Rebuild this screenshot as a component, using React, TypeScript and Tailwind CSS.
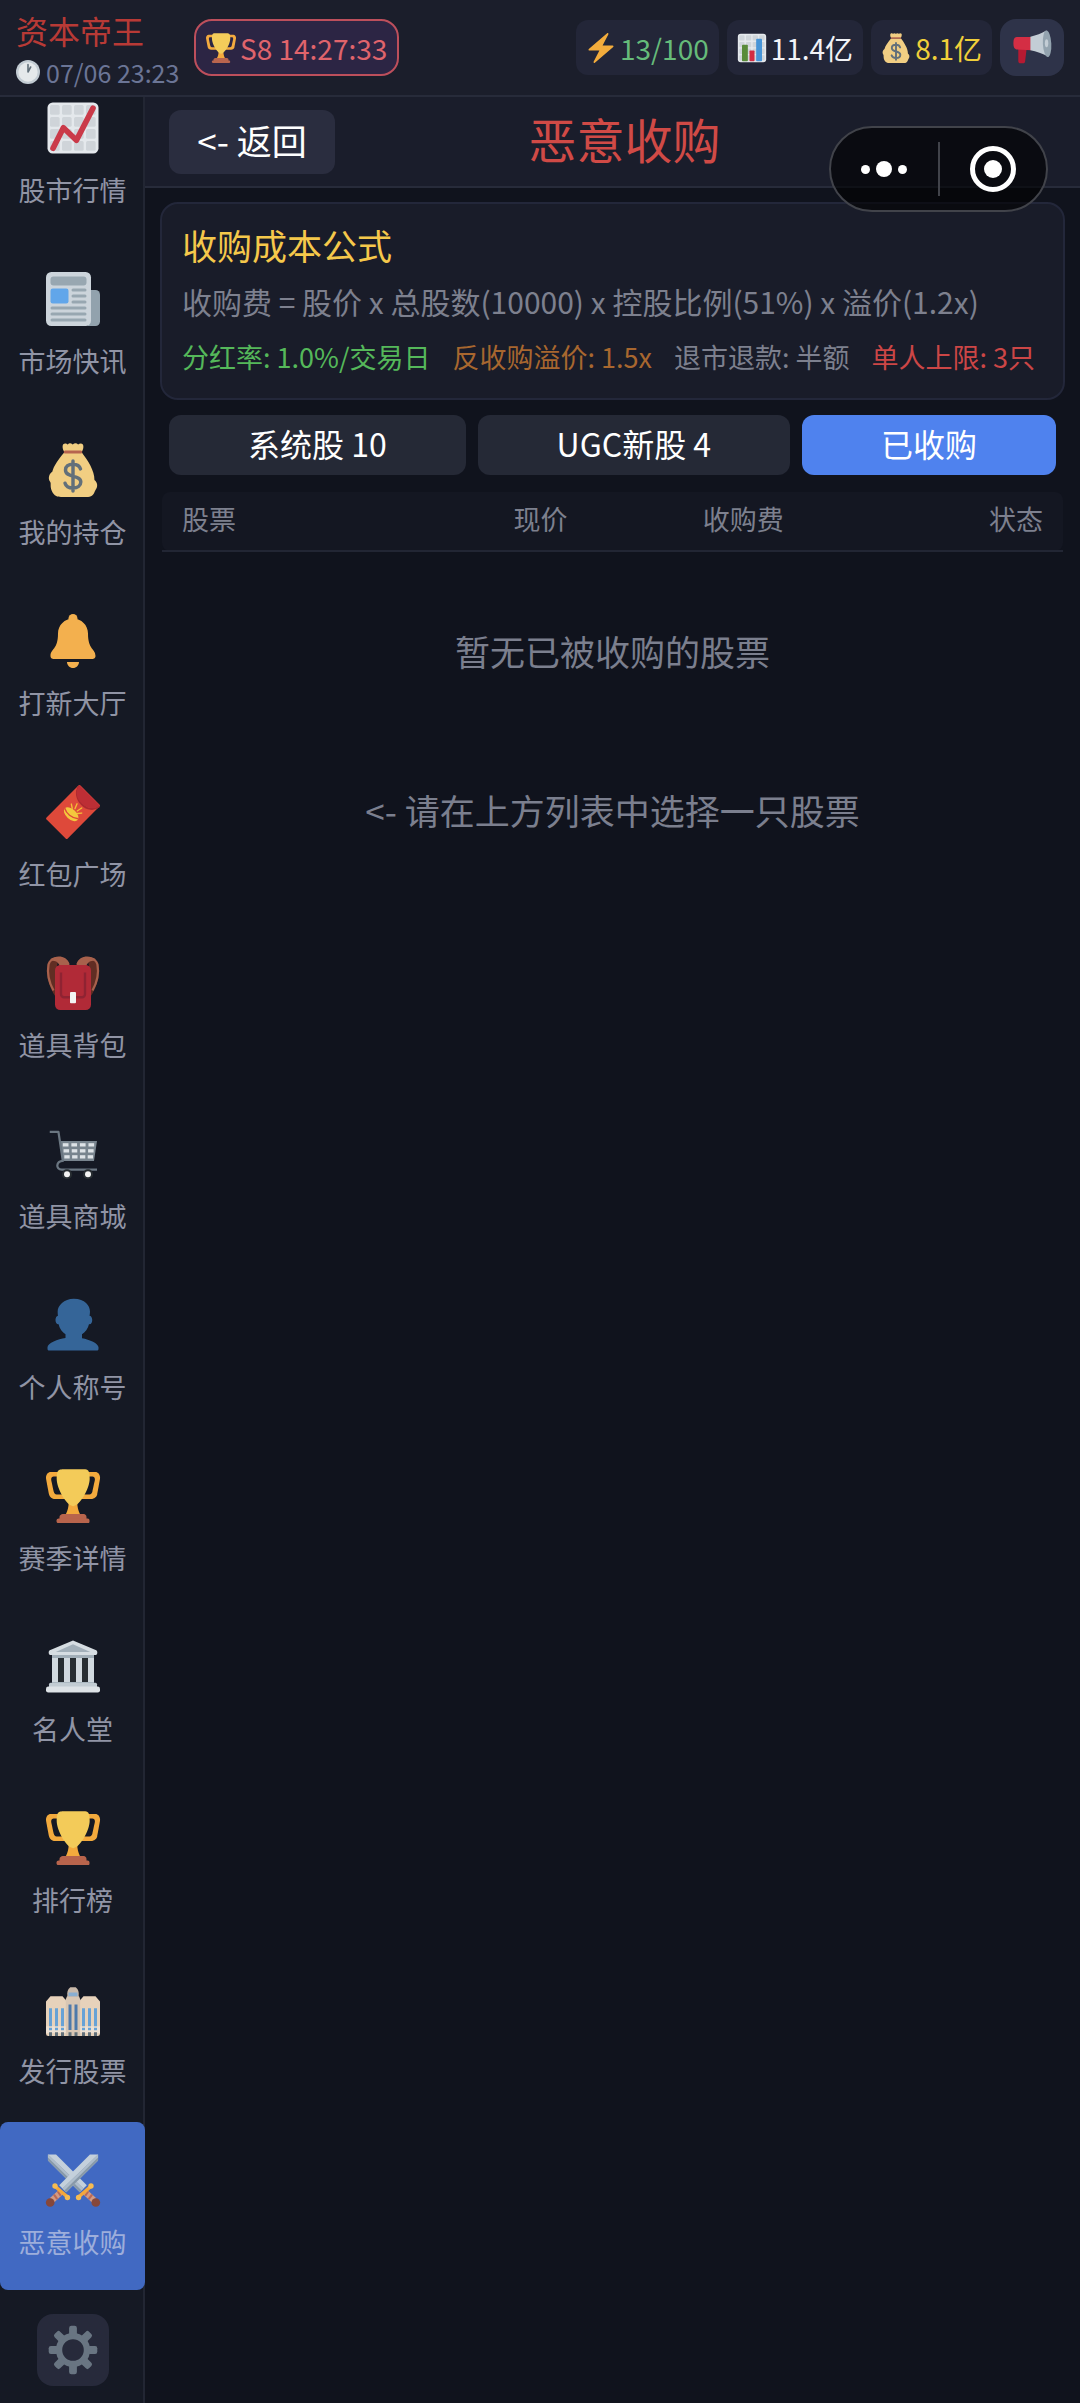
import type { PropsWithChildren, ReactNode } from "react";

import clsx from "clsx";

function Emoji({ className, children }: PropsWithChildren<{ className?: string }>) {
  return (
    <svg viewBox="0 0 36 36" aria-hidden="true" className={clsx("shrink-0 overflow-visible opacity-95", className)}>
      {children}
    </svg>
  );
}

type IconProps = { className?: string };

function TrophyIcon({ className }: IconProps) {
  return (
    <Emoji className={className}>
      <path
        fill="#FFB23F"
        d="M5.123 5h6C12.227 5 13 4.896 13 6V4c0-1.104-.773-2-1.877-2h-8c-2 0-3.583 2.125-3 5 0 0 1.791 9.375 1.917 9.958C2.373 18.5 4.164 20 6.081 20h6.958c1.105 0-.039-1.896-.039-3v-2c0 1.104-.773 2-1.877 2h-4c-1.104 0-1.833-1.042-2-2S3.539 7.667 3.539 7.667C3.206 5.75 4.018 5 5.123 5zm25.812 0h-6C23.831 5 22 4.896 22 6V4c0-1.104 1.831-2 2.935-2h8c2 0 3.584 2.125 3 5 0 0-1.633 9.419-1.771 10-.354 1.5-2.042 3-4 3h-7.146C21.914 20 22 18.104 22 17v-2c0 1.104 1.831 2 2.935 2h4c1.104 0 1.834-1.042 2-2s1.584-7.333 1.584-7.333C32.851 5.75 32.04 5 30.935 5zM20.832 22c0-6.958-2.709 0-2.709 0s-3-6.958-3 0-3.291 10-3.291 10h12.292c-.001 0-3.292-3.042-3.292-10z"
      />
      <path
        fill="#FFD55C"
        d="M29.123 6.577c0 6.775-6.77 18.192-11 18.192-4.231 0-11-11.417-11-18.192 0-5.195 1-6.319 3-6.319 1.374 0 6.025-.027 8-.027l7-.001c2.917-.001 4 .684 4 6.347z"
      />
      <path
        fill="#C1694F"
        d="M27 33c0 1.104.227 2-.877 2h-16C9.018 35 9 34.104 9 33v-1c0-1.104 1.164-2 2.206-2h13.917c1.042 0 1.877.896 1.877 2v1z"
      />
      <path
        fill="#C1694F"
        d="M29 34.625c0 .76.165 1.375-1.252 1.375H8.498C7.206 36 7 35.385 7 34.625v-.25C7 33.615 7.738 33 8.498 33h19.25c.759 0 1.252.615 1.252 1.375v.25z"
      />
    </Emoji>
  );
}

function ClockIcon({ className }: IconProps) {
  return (
    <Emoji className={className}>
      <circle cx="18" cy="18" r="18" fill="#CCD6DD" />
      <circle cx="18" cy="18" r="14.5" fill="#F0F4F6" />
      <path d="M18 18V7M18 18l4-7.5" stroke="#66757F" strokeWidth="2.4" strokeLinecap="round" />
    </Emoji>
  );
}

function BoltIcon({ className }: IconProps) {
  return (
    <Emoji className={className}>
      <path
        fill="#FFB43D"
        d="M32.938 15.651C32.792 15.26 32.418 15 32 15H19.925L26.89 1.458c.219-.426.106-.947-.271-1.243C26.437.071 26.218 0 26 0c-.233 0-.466.082-.653.243L18 6.588 3.347 19.243c-.316.273-.43.714-.284 1.105S3.582 21 4 21h12.075L9.11 34.542c-.219.426-.106.947.271 1.243.182.144.401.215.619.215.233 0 .466-.082.653-.243L18 29.412l14.653-12.655c.317-.273.43-.714.285-1.106z"
      />
    </Emoji>
  );
}

const gridSteps = [2.7, 10.7, 18.7, 26.7];

function ChartPaper() {
  return (
    <>
      <rect x="1" y="1" width="34" height="34" rx="3.5" fill="#F0F4F7" />
      {gridSteps.map((y) =>
        gridSteps.map((x) => <rect key={`${x}-${y}`} x={x} y={y} width="6.4" height="6.4" rx="1" fill="#D9DFE3" />)
      )}
    </>
  );
}

function BarChartIcon({ className }: IconProps) {
  return (
    <Emoji className={className}>
      <ChartPaper />
      <rect x="6" y="14" width="7" height="20" rx="1" fill="#5C913B" />
      <rect x="15" y="21" width="6" height="13" rx="1" fill="#DD2E44" />
      <rect x="23" y="7" width="7" height="27" rx="1" fill="#4B9BE0" />
    </Emoji>
  );
}

function TrendIcon({ className }: IconProps) {
  return (
    <Emoji className={className}>
      <ChartPaper />
      <path
        d="M4.7 31.5 11.6 17.8 20.3 26.2 31.3 4.8"
        fill="none"
        stroke="#D43C4C"
        strokeWidth="3.8"
        strokeLinecap="round"
        strokeLinejoin="round"
      />
    </Emoji>
  );
}

function MoneyBagIcon({ className }: IconProps) {
  return (
    <Emoji className={className}>
      <path
        fill="#FDD888"
        d="M12 6.5C8.500 10.5 5 15.5 4.2 19.2 2.2 20.5 1.4 23 2.3 25.2c.7 1 .9 1.3.8 2.6-.1 3.2 1.2 6 3.700 7.6.8.5 2 .6 3.200.6h17c1.500 0 2.700-.1 3.800-1 1.300-1 1.400-2.400 2.200-3.700 1.700-2.300 1.500-5-.7-6.700.1-6.200-4.600-13.200-8.300-18.100z"
      />
      <path
        fill="#FDD888"
        d="M12.3 6C11 4.5 10.7 2 11.5.9c.8-1 2.300-.6 3 .1C15.500-.1 16.600.1 17.800 1c1.200-.9 2.500-1.100 3.600 0 1-.8 2.400-1 3.200 0 .7 1.200.2 3.600-.9 5z"
      />
      <rect x="11.8" y="5" width="12.4" height="2" rx="1" fill="#BF6952" />
      <path
        d="M18 12v20M23 17.3c-.6-2.200-2.600-3.200-5-3.200-3 0-5 1.500-5 3.900 0 5.500 10.200 3 10.200 8 0 2.500-2.200 4-5.200 4-2.700 0-4.700-1.100-5.300-3.200"
        fill="none"
        stroke="#67757F"
        strokeWidth="2.3"
        strokeLinecap="round"
      />
    </Emoji>
  );
}

function MegaphoneIcon({ className }: IconProps) {
  return (
    <Emoji className={className}>
      <path fill="#BE1931" d="M5 18h8l-1.5 12.5c-.1 1.300-.8 2-2 2H7c-1.200 0-2-.8-2-2z" />
      <path fill="#DD2E44" d="M3.5 7.5H17v12.7L4 19.5C1.5 19.3.4 17.5.4 13.5.4 9.5 1.2 7.7 3.5 7.5z" />
      <path fill="#CCD6DD" d="M16.5 7.4C22 6.2 27 4 31.6 1.5l2 24.7C28 23.6 22 21 16.5 20.2z" />
      <ellipse cx="32.3" cy="14" rx="4" ry="12.5" fill="#99AAB5" transform="rotate(-3 32.3 14)" />
      <ellipse cx="31.8" cy="13.5" rx="1.6" ry="3.8" fill="#CCD6DD" />
    </Emoji>
  );
}

function NewspaperIcon({ className }: IconProps) {
  return (
    <Emoji className={className}>
      <path fill="#99AAB5" d="M28 12h5a3 3 0 0 1 3 3v18a3 3 0 0 1-3 3h-5z" />
      <rect width="30" height="36" rx="3.5" fill="#D6DFE5" />
      <rect x="3" y="3" width="24" height="6" rx="2" fill="#A0AFB9" />
      <rect x="3" y="11" width="12" height="10" rx="1.5" fill="#66AEF5" />
      <path
        d="M18 12h8M18 16h8M18 20h8M4 24h22M4 28h22M4 32h22"
        stroke="#A0AFB9"
        strokeWidth="2"
        strokeLinecap="round"
      />
    </Emoji>
  );
}

function BellIcon({ className }: IconProps) {
  return (
    <Emoji className={className}>
      <path
        fill="#FFB951"
        d="M28 13c0 11 5 10 5 15 0 0 0 2-2 2H5c-2 0-2-2-2-2 0-5 5-4 5-15C8 7.478 12.477 3 18 3s10 4.478 10 10z"
      />
      <circle cx="18" cy="3" r="3" fill="#FFB951" />
      <path fill="#FFB951" d="M18 36c2.209 0 4-1.791 4-4h-8c0 2.209 1.791 4 4 4z" />
    </Emoji>
  );
}

function EnvelopeIcon({ className }: IconProps) {
  return (
    <Emoji className={className}>
      <path fill="#E94C3C" d="M21.6.4a1 1 0 0 1 1.4 0L35.6 13a1 1 0 0 1 0 1.4L14.5 35.6a1 1 0 0 1-1.4 0L.4 23a1 1 0 0 1 0-1.4z" />
      <path
        d="M22 .8c-2.600 3.800-1.600 8.800 2 12.200 3.200 3.200 7.800 4.200 11.600 1.200"
        fill="none"
        stroke="#B52B31"
        strokeWidth="1.2"
      />
      <path fill="#C73036" d="M22.3.1 35.9 13.7c-3.500 2.800-8.400 2.300-12-1.300-3.800-3.800-4.700-8.700-1.600-12.300z" />
      <ellipse cx="16.8" cy="19.5" rx="5.8" ry="3.4" fill="#FFD23F" transform="rotate(42 16.8 19.5)" />
      <path d="M12.5 15.5c1 3.500 4.500 6.500 9 7" fill="none" stroke="#E94C3C" strokeWidth=".9" />
      <path
        d="M17.5 15.5l-.6-2.8M19.3 15.8l1.4-3.3M20.8 17.3l3-2M21 19l2.8-.3"
        stroke="#FFC83A"
        strokeWidth=".9"
        strokeLinecap="round"
      />
    </Emoji>
  );
}

function BackpackIcon({ className }: IconProps) {
  return (
    <Emoji className={className}>
      <path fill="#662F23" d="M8 3C2 1 .3 5 .8 11 1.2 18 4 24 7 28V9zM28 3c6-2 7.700 2 7.200 8-.4 7-3.200 13-6.200 17V9z" />
      <path
        d="M15 5.500C13.500 0 3 0 1.700 5.500.7 11 2.200 18 5 23M21 5.500C22.500 0 33 0 34.300 5.500 35.300 11 33.800 18 31 23"
        fill="none"
        stroke="#B0654F"
        strokeWidth="1.5"
      />
      <path fill="#B0654F" d="M3 2C7-.8 14-.5 15.600 5.500V8H9.500C9 4.500 6 2.500 3 3.500zM33 2c-4-2.800-11-2.500-12.600 3.500V8h6.100c.5-3.500 3.500-5.500 6.500-4.500z" />
      <rect x="6" y="6" width="24" height="30" rx="3.5" fill="#BA2B39" />
      <path d="M10 11v14.500a2 2 0 0 0 2 2h12a2 2 0 0 0 2-2V11" fill="none" stroke="#962433" strokeWidth="1.6" />
      <rect x="16" y="24" width="4" height="7.5" rx=".6" fill="#FFFFFF" />
    </Emoji>
  );
}

function CartIcon({ className }: IconProps) {
  return (
    <Emoji className={className}>
      <path fill="#7E8A94" d="M9.3 9.3H34l-2 13.400H11.500z" />
      {[10.8, 14.8, 18.8].map((y, row) =>
        [0, 1, 2, 3].map((col) => (
          <rect
            key={`${y}-${col}`}
            x={11.2 + row * 0.5 + col * (5.7 - row * 0.25)}
            y={y}
            width={3.8 - row * 0.1}
            height="2.2"
            fill="#E9EEF2"
          />
        ))
      )}
      <path
        d="M2.5 3.2h5.800l2.900 19.400c-4.500.3-5 5.700-.7 5.800H34"
        fill="none"
        stroke="#6F7B86"
        strokeWidth="1.5"
        strokeLinejoin="round"
      />
      <circle cx="14" cy="31.5" r="3.4" fill="#292F33" />
      <circle cx="28" cy="31.5" r="3.4" fill="#292F33" />
      <circle cx="14" cy="31.5" r="2" fill="#FFFFFF" />
      <circle cx="28" cy="31.5" r="2" fill="#FFFFFF" />
    </Emoji>
  );
}

function PersonIcon({ className }: IconProps) {
  return (
    <Emoji className={className}>
      <path
        fill="#376A9F"
        d="M24 26.799v-2.566c2-1.348 4.080-3.779 4.703-6.896.186.103.206.170.413.170.991 0 1.709-1.287 1.709-2.873 0-1.562-.823-2.827-1.794-2.865.187-.674.293-1.577.293-2.735C29.324 5.168 26 .527 18.541.527c-6.629 0-10.777 4.641-10.777 8.507 0 1.123.069 2.043.188 2.755-.911.137-1.629 1.352-1.629 2.845 0 1.587.804 2.873 1.796 2.873.206 0 .025-.067.209-.170C8.952 20.453 11 22.885 13 24.232v2.414c-5 .645-12 3.437-12 6.230v1.061C1 35 2.076 35 3.137 35h29.725C33.924 35 35 35 35 33.938v-1.061c0-2.615-6-5.225-11-6.078z"
      />
    </Emoji>
  );
}

function HallIcon({ className }: IconProps) {
  return (
    <Emoji className={className}>
      <rect x="4" y="9" width="28" height="20" fill="#AAB8C2" />
      <path fill="#E1E8ED" d="M18 .4 33.5 6.800c1 .5 1 2.900-.3 3.200H2.800C1.500 9.700 1.500 7.300 2.500 6.800z" />
      <path fill="#AAB8C2" d="M18 2.800 29.500 8h-23z" />
      <path fill="#292F33" d="M8 12h4v16H8zM16 12h4v16h-4zM24 12h4v16h-4z" />
      <path fill="#DCE4EA" d="M4 12h4v16H4zM12 12h4v16h-4zM20 12h4v16h-4zM28 12h4v16h-4z" />
      <rect x="2" y="28.5" width="32" height="4" rx="1" fill="#CCD6DD" />
      <rect x="0" y="31" width="36" height="4" rx="1.5" fill="#E8EDF1" />
    </Emoji>
  );
}

function OfficeIcon({ className }: IconProps) {
  return (
    <Emoji className={className}>
      <path fill="#F3DCC4" d="M0 13l3-3.500h8l3 3.500h8l3-3.500h8l3 3.500v21.500A1.500 1.500 0 0 1 34.500 36h-33A1.500 1.500 0 0 1 0 34.500z" />
      <path fill="#F8EBDD" d="M0 29.500h36V34H0z" />
      <path
        fill="#6CAAE0"
        d="M2 17.500h2v12H2zM6 17.500h2v12H6zM10 17.500h2v12h-2zM24 17.500h2v12h-2zM28 17.500h2v12h-2zM32 17.500h2v12h-2zM2 30.500h2v1.700H2zM6 30.500h2v1.700H6zM10 30.500h2v1.700h-2zM24 30.500h2v1.700h-2zM28 30.500h2v1.700h-2zM32 30.500h2v1.700h-2z"
      />
      <path
        fill="#66757F"
        d="M2 33.500h2V36H2zM6 33.500h2V36H6zM10 33.500h2V36h-2zM24 33.500h2V36h-2zM28 33.500h2V36h-2zM32 33.500h2V36h-2z"
      />
      <path fill="#E3D0BC" d="M13.2 11.500l.8-2h8l.8 2V36h-9.600z" />
      <path fill="#D3C2B2" d="M16.200 3.500h3.600c1.200.8 2 2.500 2 4V10h-7.600V7.500c0-1.500.8-3.200 2-4z" />
      <path fill="#8FB6DC" d="M15 7h6v2.500h-6z" />
      <path fill="#527FB2" d="M15 15h2v17h-2zM19 15h2v17h-2z" />
      <path fill="#66757F" d="M15 33.500h2V36h-2zM19 33.500h2V36h-2z" />
    </Emoji>
  );
}

function Sword() {
  return (
    <>
      <path fill="#CCD6DD" d="M1.3 1h5.400L27.200 21.500l-4.700 4.700L1.300 5z" />
      <path fill="#8C9CA8" d="M1.3 1 25 23.700l-2.500 2.500L1.300 5z" />
      <path fill="#B4C2CC" d="M1.3 1 25 23.700l-1.300 1.300L1.300 3z" />
      <path d="M25.5 25.5l6.500 6" stroke="#D99E82" strokeWidth="4" />
      <path d="M26.2 28.5l2-3M28.5 30.7l2.200-3" stroke="#C1694F" strokeWidth="1.4" />
      <circle cx="33.2" cy="33" r="2.9" fill="#8A4633" />
      <path d="M21.5 29.5l8.700-7.500" stroke="#FFAC33" strokeWidth="2.4" />
      <circle cx="21.7" cy="29.7" r="1.8" fill="#FFC04D" />
      <circle cx="30" cy="22" r="1.8" fill="#FFC04D" />
    </>
  );
}

function SwordsIcon({ className }: IconProps) {
  return (
    <Emoji className={className}>
      <Sword />
      <g transform="matrix(-1 0 0 1 36 0)">
        <Sword />
      </g>
    </Emoji>
  );
}

function GearIcon({ className }: IconProps) {
  return (
    <Emoji className={className}>
      <circle cx="18" cy="18" r="9.3" fill="none" stroke="#6D7A86" strokeWidth="4.2" />
      {[0, 45, 90, 135, 180, 225, 270, 315].map((angle) => (
        <rect
          key={angle}
          x="15.4"
          y="1.8"
          width="5.2"
          height="6.5"
          rx="1.5"
          fill="#6D7A86"
          transform={`rotate(${angle} 18 18)`}
        />
      ))}
    </Emoji>
  );
}

const menu = [
  { label: "股市行情", Icon: TrendIcon },
  { label: "市场快讯", Icon: NewspaperIcon },
  { label: "我的持仓", Icon: MoneyBagIcon },
  { label: "打新大厅", Icon: BellIcon },
  { label: "红包广场", Icon: EnvelopeIcon },
  { label: "道具背包", Icon: BackpackIcon },
  { label: "道具商城", Icon: CartIcon },
  { label: "个人称号", Icon: PersonIcon },
  { label: "赛季详情", Icon: TrophyIcon },
  { label: "名人堂", Icon: HallIcon },
  { label: "排行榜", Icon: TrophyIcon },
  { label: "发行股票", Icon: OfficeIcon },
  { label: "恶意收购", Icon: SwordsIcon, active: true },
];

const tabs = [
  { label: "系统股 10" },
  { label: "UGC新股 4" },
  { label: "已收购", active: true },
];

function StatPill({ icon, className, children }: PropsWithChildren<{ icon: ReactNode; className: string }>) {
  return (
    <div className={clsx("flex h-[55px] items-center gap-1 rounded-xl bg-[#232638] px-2.5 text-[28px]", className)}>
      {icon}
      <span>{children}</span>
    </div>
  );
}

function TopBar() {
  return (
    <header className="flex h-[97px] shrink-0 items-center border-b-2 border-[#272b3a] bg-[#1b1e2b] px-4 whitespace-nowrap">
      <div className="flex w-[168px] flex-col gap-3">
        <p className="text-[32px] leading-9 text-[#b83a36]">资本帝王</p>
        <p className="flex items-center gap-1.5 text-[25px] leading-6 text-[#6b7596]">
          <ClockIcon className="size-6" />
          07/06 23:23
        </p>
      </div>
      <div className="ml-2.5 flex h-[57px] items-center gap-1 rounded-[18px] border-2 border-[#bd4f5c] bg-[#2c2544] px-2.5 text-[28px] text-[#e0646c]">
        <TrophyIcon className="size-[30px]" />
        S8 14:27:33
      </div>
      <div className="ml-auto flex items-center gap-2">
        <StatPill icon={<BoltIcon className="size-[30px]" />} className="text-[#66bb7a]">
          13/100
        </StatPill>
        <StatPill icon={<BarChartIcon className="size-[30px]" />} className="text-[#f2f3f7]">
          11.4亿
        </StatPill>
        <StatPill icon={<MoneyBagIcon className="size-[30px]" />} className="text-[#f0cf3a]">
          8.1亿
        </StatPill>
        <button type="button" aria-label="公告" className="flex h-[57px] w-16 items-center justify-center rounded-2xl bg-[#2e3349]">
          <MegaphoneIcon className="size-[38px]" />
        </button>
      </div>
    </header>
  );
}

function Sidebar() {
  return (
    <aside className="flex w-[145px] shrink-0 flex-col bg-[#151924] shadow-[inset_-2px_0_0_#222633]">
      {/* scrolled to the end, so the first entry is cut by the top bar */}
      <nav className="flex min-h-0 flex-1 flex-col justify-end gap-[3px] overflow-hidden">
        {menu.map(({ label, Icon, active }) => (
          <button
            key={label}
            type="button"
            className={clsx(
              "flex h-[168px] shrink-0 flex-col items-center gap-[17px] rounded-lg pt-[31px] text-[27px] leading-9",
              active ? "bg-[#4169c2] text-[#9daedb]" : "text-[#9094a5]"
            )}
          >
            <Icon className="size-[54px]" />
            {label}
          </button>
        ))}
      </nav>
      <div className="flex justify-center pt-6 pb-[17px]">
        <button type="button" aria-label="设置" className="flex size-[72px] items-center justify-center rounded-2xl bg-[#272a3b]">
          <GearIcon className="size-[54px]" />
        </button>
      </div>
    </aside>
  );
}

function Capsule() {
  return (
    <div className="absolute top-[126px] right-8 flex h-[86px] w-[219px] items-center rounded-full border-2 border-[#41434a] bg-black/60">
      <button type="button" aria-label="更多" className="flex flex-1 items-center justify-center gap-1.5">
        <span className="size-[9px] rounded-full bg-white" />
        <span className="size-4 rounded-full bg-white" />
        <span className="size-[9px] rounded-full bg-white" />
      </button>
      <span className="h-[54px] w-0.5 bg-[#41434a]" />
      <button type="button" aria-label="关闭" className="flex flex-1 items-center justify-center">
        <span className="flex size-[46px] items-center justify-center rounded-full border-[5px] border-white">
          <span className="size-[18px] rounded-full bg-white" />
        </span>
      </button>
    </div>
  );
}

function FormulaCard() {
  return (
    <section className="rounded-[18px] border-2 border-[#23273a] bg-[#191c29] px-5 py-[18px]">
      <h2 className="text-[35px] leading-[46px] text-[#f5c84b]">收购成本公式</h2>
      <p className="mt-2.5 text-[30px] leading-[46px] whitespace-nowrap text-[#7d808e]">
        收购费 = 股价 x 总股数(10000) x 控股比例(51%) x 溢价(1.2x)
      </p>
      <ul className="mt-2.5 flex gap-[22px] text-[27px] leading-[46px] whitespace-nowrap">
        <li className="text-[#55b85a]">分红率: 1.0%/交易日</li>
        <li className="text-[#a8672f]">反收购溢价: 1.5x</li>
        <li className="text-[#7d808e]">退市退款: 半额</li>
        <li className="text-[#cc4646]">单人上限: 3只</li>
      </ul>
    </section>
  );
}

function StockTable() {
  return (
    <table className="mt-[17px] w-full table-fixed">
      <thead className="text-[27px] leading-[38px] text-[#7d808e]">
        <tr>
          <th className="w-[30%] rounded-l-lg border-b-2 border-[#222634] bg-[#141722] pt-2 pb-3 pl-5 text-left font-normal">股票</th>
          <th className="w-[15%] border-b-2 border-[#222634] bg-[#141722] pt-2 pb-3 text-right font-normal">现价</th>
          <th className="w-[24%] border-b-2 border-[#222634] bg-[#141722] pt-2 pb-3 text-right font-normal">收购费</th>
          <th className="rounded-r-lg border-b-2 border-[#222634] bg-[#141722] pt-2 pr-5 pb-3 text-right font-normal">状态</th>
        </tr>
      </thead>
      <tbody>
        <tr>
          <td colSpan={4} className="pt-[74px] text-center text-[35px] leading-[50px] text-[#7b7f8e]">
            暂无已被收购的股票
          </td>
        </tr>
      </tbody>
    </table>
  );
}

export default function App() {
  return (
    <div className="relative flex h-screen flex-col overflow-hidden bg-[#10131d] font-['Noto_Sans_CJK_SC',sans-serif]">
      <TopBar />
      <div className="flex min-h-0 flex-1">
        <Sidebar />
        <main className="min-w-0 flex-1">
          <div className="flex h-[91px] items-center border-b-2 border-[#272b3a] bg-[#1a1d2b] px-6">
            <button type="button" className="h-16 w-[166px] rounded-xl bg-[#2a2d3f] pb-0.5 text-[35px] text-white">
              &lt;- 返回
            </button>
            <h1 className="mr-[142px] flex-1 pb-2 text-center text-[48px] leading-[60px] text-[#d04a46]">恶意收购</h1>
          </div>
          <div className="px-[15px] pt-3.5">
            <FormulaCard />
            <div className="mt-[15px] flex gap-3 px-[9px]">
              {tabs.map(({ label, active }) => (
                <button
                  key={label}
                  type="button"
                  className={clsx(
                    "h-[60px] flex-auto rounded-xl pb-1 text-[32px] text-white",
                    active ? "bg-[#4f82ee]" : "bg-[#252936]"
                  )}
                >
                  {label}
                </button>
              ))}
            </div>
            <div className="px-0.5">
              <StockTable />
              <p className="mt-[109px] text-center text-[35px] leading-[50px] text-[#7b7f8e]">&lt;- 请在上方列表中选择一只股票</p>
            </div>
          </div>
        </main>
      </div>
      <Capsule />
    </div>
  );
}
